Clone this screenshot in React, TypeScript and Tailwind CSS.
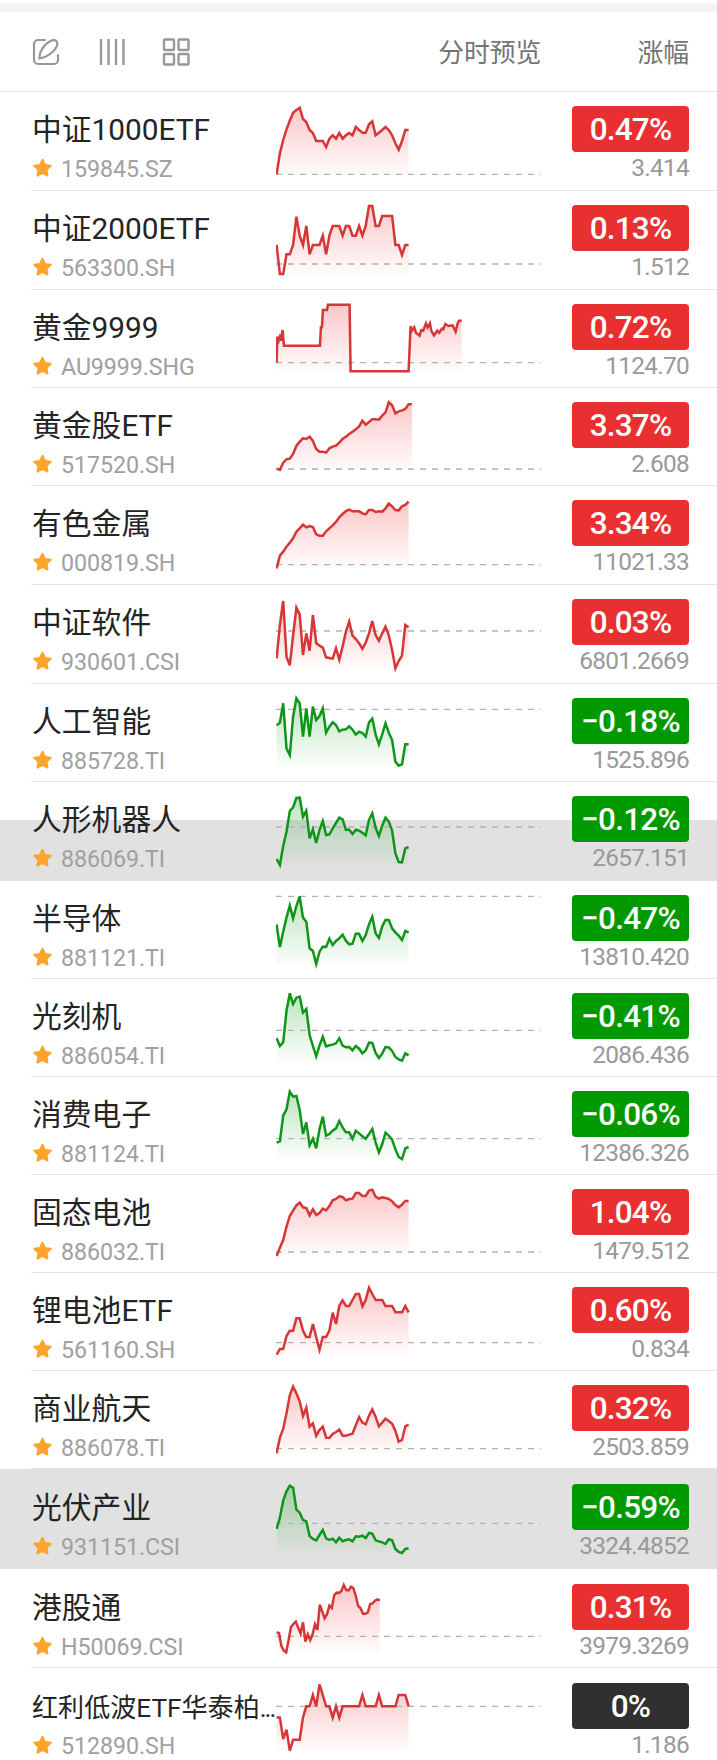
// React
import React from "react";
// React

// Models
type T_Trend = "up" | "down" | "flat";

interface I_Quote {
  name: string;
  code: string;
  change: string;
  price: string;
  trend: T_Trend;
  height: string;
  highlight?: "full" | "partial";
  truncated?: boolean;
  // Levels are in thirds of a pixel, shift moves them to the top of the row
  shift: number;
  base: number;
  step?: number;
  xs?: number[];
  levels: number[];
}
// Models

const QUOTES: I_Quote[] = [
  {
    name: "中证1000ETF", code: "159845.SZ", change: "0.47%", price: "3.414",
    trend: "up", height: "h-[99px]", shift: -2, base: 253,
    levels: [253, 190, 150, 118, 92, 68, 60, 53, 87, 96, 120, 129, 153, 153, 153, 171, 146, 136, 146, 129, 146, 136, 129, 136, 111, 120, 128, 128, 103, 94, 136, 128, 120, 111, 120, 136, 160, 179, 153, 120, 120],
  },
  {
    name: "中证2000ETF", code: "563300.SH", change: "0.13%", price: "1.512",
    trend: "up", height: "h-[99px]", shift: -101, base: 522,
    levels: [465, 552, 552, 493, 493, 465, 380, 437, 465, 408, 493, 465, 465, 465, 437, 493, 437, 408, 408, 408, 437, 408, 408, 437, 437, 408, 437, 408, 348, 348, 408, 408, 378, 378, 378, 378, 465, 465, 495, 465, 465],
  },
  {
    name: "黄金9999", code: "AU9999.SHG", change: "0.72%", price: "1124.70",
    trend: "up", height: "h-[98px]", shift: 0, base: 218,
    xs: [0, 2, 6, 10, 14, 18, 22, 130, 133, 136, 139, 151, 154, 219, 222, 396, 402, 406, 413, 418, 429, 434, 440, 448, 453, 460, 464, 472, 482, 488, 496, 500, 506, 516, 528, 537, 542, 547, 555],
    levels: [218, 140, 152, 140, 152, 120, 167, 167, 112, 112, 60, 60, 44, 44, 244, 244, 108, 122, 112, 128, 137, 120, 122, 100, 112, 100, 122, 136, 122, 128, 116, 118, 102, 108, 106, 125, 104, 92, 92],
  },
  {
    name: "黄金股ETF", code: "517520.SH", change: "3.37%", price: "2.608",
    trend: "up", height: "h-[98px]", shift: -98, base: 537,
    levels: [536, 540, 518, 508, 506, 492, 468, 455, 445, 447, 440, 453, 477, 485, 485, 488, 475, 470, 467, 458, 447, 440, 432, 425, 418, 409, 392, 404, 396, 388, 388, 389, 377, 367, 337, 346, 370, 364, 361, 357, 343, 343],
  },
  {
    name: "有色金属", code: "000819.SH", change: "3.34%", price: "11021.33",
    trend: "up", height: "h-[99px]", shift: -1, base: 239,
    levels: [250, 212, 200, 185, 173, 160, 140, 130, 119, 127, 123, 126, 148, 152, 152, 139, 130, 121, 111, 97, 87, 78, 74, 79, 79, 79, 85, 88, 75, 75, 81, 79, 80, 70, 56, 64, 75, 76, 64, 60, 50],
  },
  {
    name: "中证软件", code: "930601.CSI", change: "0.03%", price: "6801.2669",
    trend: "up", height: "h-[99px]", shift: -100, base: 438,
    levels: [520, 420, 348, 515, 541, 452, 368, 388, 510, 445, 497, 390, 474, 482, 488, 517, 519, 521, 490, 524, 485, 440, 410, 452, 462, 475, 491, 473, 445, 408, 450, 467, 445, 425, 451, 495, 550, 528, 512, 420, 427],
  },
  {
    name: "人工智能", code: "885728.TI", change: "−0.18%", price: "1525.896",
    trend: "down", height: "h-[98px]", shift: 1, base: 73,
    levels: [121, 113, 55, 190, 210, 95, 40, 55, 155, 70, 155, 65, 105, 93, 70, 143, 125, 112, 120, 139, 134, 133, 124, 134, 149, 140, 144, 155, 112, 101, 148, 178, 148, 115, 143, 165, 230, 242, 238, 178, 178],
  },
  {
    name: "人形机器人", code: "886069.TI", change: "−0.12%", price: "2657.151",
    trend: "down", height: "h-[99px]", highlight: "partial", shift: -97, base: 426,
    levels: [522, 540, 483, 440, 378, 367, 339, 338, 395, 377, 460, 433, 474, 435, 408, 450, 448, 430, 414, 398, 403, 434, 434, 447, 434, 437, 443, 451, 405, 385, 428, 453, 422, 398, 410, 437, 505, 531, 532, 490, 486],
  },
  {
    name: "半导体", code: "881121.TI", change: "−0.47%", price: "13810.420",
    trend: "down", height: "h-[98px]", shift: 4, base: 34,
    levels: [118, 186, 140, 98, 62, 100, 63, 34, 98, 110, 190, 198, 237, 200, 185, 186, 161, 180, 168, 160, 149, 167, 178, 176, 146, 146, 168, 150, 118, 95, 145, 159, 124, 105, 105, 130, 142, 152, 165, 138, 142],
  },
  {
    name: "光刻机", code: "886054.TI", change: "−0.41%", price: "2086.436",
    trend: "down", height: "h-[98px]", shift: -94, base: 436,
    levels: [460, 483, 472, 378, 325, 357, 338, 335, 383, 372, 450, 483, 514, 482, 455, 484, 481, 479, 475, 460, 482, 487, 486, 496, 483, 491, 505, 496, 473, 474, 504, 519, 506, 486, 487, 498, 516, 523, 527, 505, 511],
  },
  {
    name: "消费电子", code: "881124.TI", change: "−0.06%", price: "12386.326",
    trend: "down", height: "h-[98px]", shift: 3, base: 176,
    levels: [188, 184, 107, 88, 35, 50, 48, 90, 162, 127, 196, 176, 205, 148, 110, 167, 162, 152, 145, 123, 142, 157, 157, 176, 152, 160, 169, 176, 162, 147, 187, 217, 193, 158, 167, 179, 208, 231, 237, 205, 201],
  },
  {
    name: "固态电池", code: "886032.TI", change: "1.04%", price: "1479.512",
    trend: "up", height: "h-[98px]", shift: -95, base: 516,
    levels: [528, 503, 480, 440, 408, 392, 376, 368, 382, 384, 406, 388, 405, 399, 386, 391, 378, 361, 357, 349, 351, 361, 357, 356, 339, 339, 348, 348, 332, 329, 350, 356, 352, 354, 357, 364, 375, 382, 374, 363, 363],
  },
  {
    name: "锂电池ETF", code: "561160.SH", change: "0.60%", price: "0.834",
    trend: "up", height: "h-[98px]", shift: 7, base: 188,
    levels: [224, 207, 207, 168, 152, 152, 115, 115, 152, 171, 171, 132, 171, 209, 171, 171, 152, 98, 132, 77, 61, 78, 78, 60, 42, 42, 79, 60, 23, 42, 60, 60, 60, 78, 78, 78, 97, 97, 97, 78, 97],
  },
  {
    name: "商业航天", code: "886078.TI", change: "0.32%", price: "2503.859",
    trend: "up", height: "h-[98px]", shift: -91, base: 506,
    levels: [520, 473, 447, 400, 346, 320, 340, 364, 408, 383, 440, 430, 467, 450, 440, 473, 474, 462, 456, 449, 467, 467, 464, 461, 436, 411, 428, 433, 407, 388, 410, 439, 428, 416, 423, 431, 453, 485, 480, 439, 434],
  },
  {
    name: "光伏产业", code: "931151.CSI", change: "−0.59%", price: "3324.4852",
    trend: "down", height: "h-[100px] pt-px", highlight: "full", shift: 0, base: 160,
    levels: [177, 143, 92, 64, 47, 53, 119, 128, 150, 154, 198, 207, 211, 195, 180, 205, 210, 206, 217, 203, 214, 210, 208, 214, 199, 200, 197, 204, 189, 191, 211, 214, 217, 222, 208, 211, 237, 246, 249, 237, 235],
  },
  {
    name: "港股通", code: "H50069.CSI", change: "0.31%", price: "3979.3269",
    trend: "up", height: "h-[99px] pt-px", shift: -100, base: 499, step: 7.2,
    levels: [487, 489, 528, 542, 547, 510, 471, 462, 455, 473, 490, 457, 515, 493, 510, 493, 463, 480, 404, 424, 445, 433, 407, 414, 376, 368, 369, 363, 345, 360, 361, 350, 355, 378, 408, 415, 431, 431, 428, 402, 400, 392, 388, 391],
  },
  {
    name: "红利低波ETF华泰柏", code: "512890.SH", change: "0%", price: "1.186",
    trend: "flat", height: "h-[92px] pt-px", truncated: true, shift: -199, base: 709,
    levels: [742, 743, 807, 779, 842, 809, 809, 809, 742, 709, 709, 675, 709, 643, 675, 709, 709, 743, 709, 743, 709, 709, 709, 709, 709, 709, 675, 709, 709, 709, 709, 675, 709, 709, 709, 709, 709, 675, 675, 675, 709],
  },
];

const BADGE_COLORS: Record<T_Trend, string> = {
  up: "bg-[#e93030]",
  down: "bg-[#009900]",
  flat: "bg-[#303030]",
};

const Sparkline: React.FunctionComponent<{ data: I_Quote }> = ({ data }) => {
  const { levels, xs, step = 9.9, shift, base, trend, code } = data;
  const color = trend === "down" ? "#0f9618" : "#d63636";
  const fill = trend === "down" ? "#12a01c" : "#f03a3a";
  const toY = (v: number) => shift + v / 3;
  const points = levels.map((v, i) => [
    0.6 + (xs ? xs[i] : i * step) / 3,
    toY(v),
  ]);
  const line = points.map((p) => `${p[0].toFixed(2)},${p[1].toFixed(2)}`).join(" ");
  const lastX = points[points.length - 1][0];
  const top = toY(Math.min(...levels, base));
  const bottom = toY(Math.max(...levels));
  const id = `fill-${code.replace(".", "-")}`;

  return (
    <svg className="h-[98px] w-[265px] shrink-0" viewBox="0 0 265 98" fill="none">
      <defs>
        <linearGradient id={id} gradientUnits="userSpaceOnUse" x1="0" x2="0" y1={top} y2={bottom}>
          <stop offset="0" stopColor={fill} stopOpacity="0.28" />
          <stop offset="1" stopColor={fill} stopOpacity="0.02" />
        </linearGradient>
      </defs>
      <polygon points={`0.6,${bottom} ${line} ${lastX},${bottom}`} fill={`url(#${id})`} />
      <path d={`M0 ${toY(base)}H265`} stroke="#b2b2b2" strokeWidth="1.4" strokeDasharray="6 6" />
      <polyline points={line} stroke={color} strokeWidth="2.5" />
    </svg>
  );
};

const Star: React.FunctionComponent = () => (
  <svg className="size-5 shrink-0" viewBox="0 0 20 20">
    <path
      d="M10.500 1.800l2.500 5.200 5.700.8-4.200 4.100 1 5.700-5-2.700-5 2.700 1-5.700-4.200-4.100 5.700-.8z"
      fill="#ffa42b"
      stroke="#ffa42b"
      strokeWidth="2"
      strokeLinejoin="round"
    />
  </svg>
);

const Row: React.FunctionComponent<{ data: I_Quote }> = ({ data }) => (
  <li
    className={`${data.height} overflow-hidden pl-[31px] ${
      data.highlight === "full"
        ? "bg-[#e1e1e1]"
        : data.highlight === "partial"
          ? "bg-linear-to-b from-white from-[38px] to-[#e1e1e1] to-[38px]"
          : ""
    }`}
  >
    <div
      className={`flex h-full items-start pr-7 ${
        data.highlight || data.truncated ? "" : "border-b border-[#e4e4e4]"
      }`}
    >
      <div className="w-[245px] shrink-0 pl-px pt-4 whitespace-nowrap">
        <h2
          className={`h-11 text-[#242424] ${
            data.truncated
              ? "text-[26.1px] leading-[46px]"
              : "text-[29.8px] leading-[44px]"
          }`}
        >
          {data.name}
          {data.truncated && <span className="tracking-[-2px]">...</span>}
        </h2>
        <p className="flex h-8 items-center gap-[9px] text-[23.2px] text-[#a0a0a0]">
          <Star />
          <span className="pt-0.5 tracking-[-0.05px]">{data.code}</span>
        </p>
      </div>
      <Sparkline data={data} />
      <div className="ml-auto flex w-[117px] shrink-0 flex-col items-end pt-3.5">
        <span
          className={`flex h-[46px] w-full items-center justify-center rounded-[4px] pt-0.5 text-[31.5px] font-medium tracking-[-0.8px] text-white ${BADGE_COLORS[data.trend]}`}
        >
          {data.change}
        </span>
        <span className="h-8 text-[24.4px] leading-8 tracking-[-0.7px] text-[#999]">
          {data.price}
        </span>
      </div>
    </div>
  </li>
);

const Toolbar: React.FunctionComponent = () => (
  <header className="flex h-20 items-center border-b border-[#e8e8e8] pr-7 pl-8 text-[25.8px] text-[#747474]">
    <div className="flex items-center gap-[37px] text-[#989898]">
      <svg className="size-7" viewBox="0 0 28 28" fill="none" stroke="currentColor" strokeWidth="2.2" strokeLinecap="round">
        <path d="M13 2H6a4 4 0 0 0-4 4v16a4 4 0 0 0 4 4h16a4 4 0 0 0 4-4v-5" />
        <path d="M7.500 20.500c-.5-6 4-14 11-17.500 3-1.500 5.500-1 6.500 1 1 3-.5 6-3.500 9-4.500 4.500-8 6.500-14 7.500z" />
      </svg>
      <svg className="size-7" viewBox="0 0 28 28" fill="none" stroke="currentColor" strokeWidth="2.4">
        <path d="M4 1v26M11.500 1v26M19 1v26M26.500 1v26" />
      </svg>
      <svg className="size-7" viewBox="0 0 28 28" fill="none" stroke="currentColor" strokeWidth="2.4">
        <rect x="2" y="1.500" width="10" height="10.500" rx="1" />
        <rect x="16.500" y="1.500" width="10" height="10.500" rx="1" />
        <rect x="2" y="16" width="10" height="10.500" rx="1" />
        <rect x="16.500" y="16" width="10" height="10.500" rx="1" />
      </svg>
    </div>
    <span className="ml-auto pt-1">分时预览</span>
    <span className="ml-24 pt-1">涨幅</span>
  </header>
);

const App: React.FunctionComponent = () => (
  <main className="h-[1760px] w-[717px] overflow-hidden bg-white pt-[3px] font-[Roboto,'Noto_Sans_CJK_SC',sans-serif]">
    <div className="h-[9px] bg-[#f4f4f4]" />
    <Toolbar />
    <ul>
      {QUOTES.map((item) => (
        <Row key={item.code} data={item} />
      ))}
    </ul>
  </main>
);

export default App;
